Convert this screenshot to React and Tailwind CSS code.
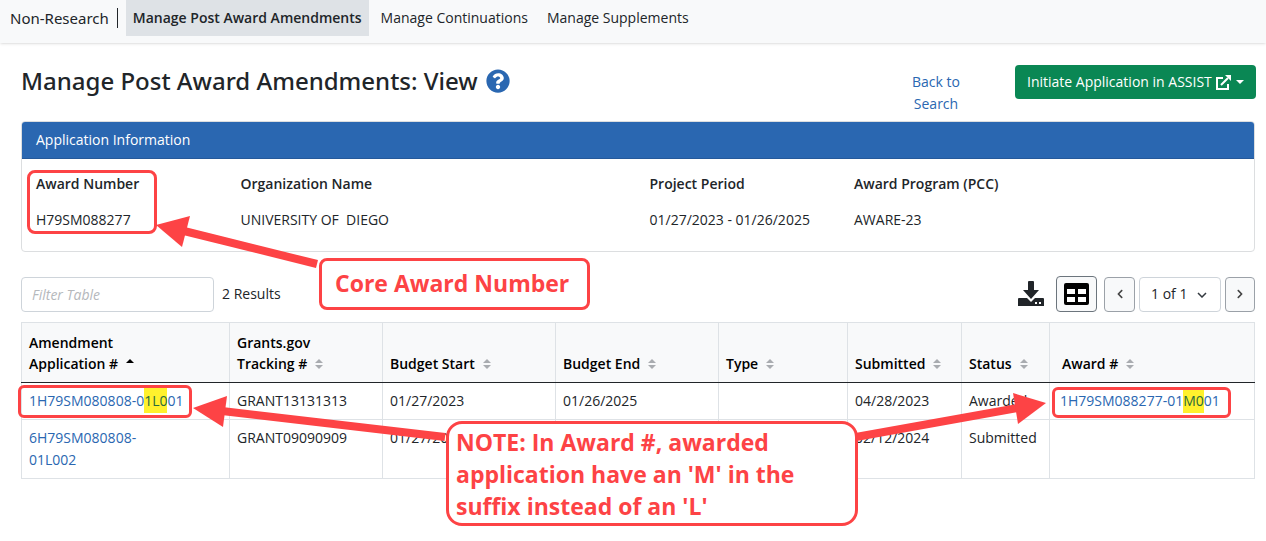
import React, { useState } from 'react';
import { FaQuestionCircle, FaChevronLeft, FaChevronRight } from 'react-icons/fa';

const tabs = ['Manage Post Award Amendments', 'Manage Continuations', 'Manage Supplements'];

const info = [
    { label: 'Award Number', value: 'H79SM088277', width: 'w-1/6' },
    { label: 'Organization Name', value: 'UNIVERSITY OF  DIEGO', width: 'w-1/3' },
    { label: 'Project Period', value: '01/27/2023 - 01/26/2025', width: 'w-1/6' },
    { label: 'Award Program (PCC)', value: 'AWARE-23', width: 'w-1/3' },
];

const columns = [
    { label: 'Amendment Application #', width: 'w-[208px]', sorted: true },
    { label: 'Grants.gov Tracking #', width: 'w-[153px]' },
    { label: 'Budget Start', width: 'w-[173px]' },
    { label: 'Budget End', width: 'w-[163px]' },
    { label: 'Type', width: 'w-[129px]' },
    { label: 'Submitted', width: 'w-[114px]' },
    { label: 'Status', width: 'w-[88px]' },
    { label: 'Award #', width: 'w-auto' },
];

const rows = [
    {
        application: ['1H79SM080808-0', '1L0', '01'],
        tracking: 'GRANT13131313',
        start: '01/27/2023',
        end: '01/26/2025',
        type: '',
        submitted: '04/28/2023',
        status: 'Awarded',
        award: ['1H79SM088277-01', 'M0', '01'],
    },
    {
        application: ['6H79SM080808- 01L002'],
        tracking: 'GRANT09090909',
        start: '01/27/2023',
        end: '',
        type: '',
        submitted: '02/12/2024',
        status: 'Submitted',
    },
];

const SortIcon = ({ sorted }) => (
    <svg viewBox="0 0 8 12" className="inline-block w-2 h-3 ml-2 align-[-1px]" aria-hidden="true">
        {sorted ? (
            <path d="M0 5 4 1l4 4z" fill="#000" />
        ) : (
            <path d="M0 5 4 1l4 4zM0 7h8l-4 4z" fill="#a9acb0" />
        )}
    </svg>
);

const ExternalIcon = () => (
    <svg viewBox="0 0 15 15" className="w-[15px] h-[15px] ml-1" aria-hidden="true">
        <path d="M7 3H1v11h11V9M5 10l7-7" fill="none" stroke="currentColor" strokeWidth="2" />
        <path d="M9 0h6v6z" fill="currentColor" />
    </svg>
);

const DownloadIcon = () => (
    <svg viewBox="0 0 26 26" className="w-[26px] h-[26px]" aria-hidden="true">
        <path
            d="M11 0h4q1 0 1 1v8h5l-8 9-8-9h5V1q0-1 1-1zM1 17h8l4 4 4-4h8q1 0 1 1v7H0v-7q0-1 1-1z"
            fill="#212529"
        />
        <path d="M17 21h2v2h-2zM21 21h2v2h-2z" fill="#fff" />
    </svg>
);

const GridIcon = () => (
    <svg viewBox="0 0 25 22" className="w-[25px] h-[22px]" aria-hidden="true">
        <rect width="25" height="22" rx="2" fill="#000" />
        <path d="M3 6h8v5H3zM14 6h8v5h-8zM3 14h8v5H3zM14 14h8v5h-8z" fill="#fff" />
    </svg>
);

const Link = ({ parts }) => {
    const [before, marked, after] = parts;
    return (
        <a href="#" className="text-[#2a67b1]">
            {before}
            {marked && <mark className="bg-[#fff12d] text-[#2a6a3c] py-[3px]">{marked}</mark>}
            {after}
        </a>
    );
};

// Callout arrows, each drawn in its own box above the page
const Arrow = ({ className, viewBox, head, shaft }) => (
    <svg viewBox={viewBox} className={`absolute pointer-events-none ${className}`} aria-hidden="true">
        <path d={shaft} stroke="#fd4345" strokeWidth="8" />
        <path d={head} fill="#fd4345" />
    </svg>
);

const App = () => {
    const [filter, setFilter] = useState('');

    return (
        <div className="relative min-h-screen overflow-hidden bg-white text-[#212529] text-[14px] leading-[22px] font-['Open_Sans','Noto_Sans',sans-serif]">
            {/* Top navigation */}
            <nav className="flex items-start h-[43px] bg-[#f8f9fa] shadow-sm">
                <span className="mt-2 pl-[10px] pr-2 text-[15px] border-r border-[#212529] leading-5 font-['Noto_Sans',sans-serif]">Non-Research</span>
                <div className="flex ml-2">
                    {tabs.map((tab, i) => (
                        <a
                            key={tab}
                            href="#"
                            className={i === 0 ? 'h-9 px-[7px] py-[7px] mr-1 font-semibold bg-[#dee2e6]' : 'h-9 px-2 py-[7px] mr-[3px]'}
                        >
                            {tab}
                        </a>
                    ))}
                </div>
            </nav>

            <main className="pl-[21px] pr-[11px]">
                {/* Title */}
                <header className="flex items-start pt-[22px] h-[78px] -mr-px">
                    <h1 className="flex items-center gap-2 text-[24px] leading-8 font-medium font-['Noto_Sans',sans-serif]">
                        Manage Post Award Amendments: View
                        <FaQuestionCircle className="w-6 h-6 text-[#2a67b1]" />
                    </h1>
                    <a href="#" className="w-16 mt-[6px] ml-auto mr-[47px] text-center text-[#2a67b1]">Back to Search</a>
                    <button className="flex items-center w-[241px] h-[34px] px-3 rounded bg-[#0a8754] text-white whitespace-nowrap">
                        Initiate Application in ASSIST
                        <ExternalIcon />
                        <svg viewBox="0 0 8 4" className="w-2 h-1 ml-auto" aria-hidden="true">
                            <path d="M0 0h8L4 4z" fill="currentColor" />
                        </svg>
                    </button>
                </header>

                {/* Application information */}
                <section className="h-[131px] border border-[#dcdee0] rounded overflow-hidden">
                    <h2 className="px-[14px] py-[7px] bg-[#2a67b1] border-b border-[#25599a] text-white">Application Information</h2>
                    <dl className="flex ml-[14px] -mr-[9px] pt-[14px]">
                        {info.map((item) => (
                            <div key={item.label} className={item.width}>
                                <dt className="font-semibold">{item.label}</dt>
                                <dd className="mt-[14px] whitespace-pre">{item.value}</dd>
                            </div>
                        ))}
                    </dl>
                </section>

                {/* Table toolbar */}
                <div className="flex items-center h-[36px] mt-6">
                    <input
                        type="text"
                        aria-label="Filter Table"
                        placeholder="Filter Table"
                        value={filter}
                        onChange={(e) => setFilter(e.target.value)}
                        className="w-[193px] h-[35px] px-[10px] border border-[#ced4da] rounded placeholder:italic placeholder:text-[#b5b8bc]"
                    />
                    <span className="ml-2">2 Results</span>
                    <button aria-label="Download" className="ml-auto mr-3">
                        <DownloadIcon />
                    </button>
                    <button aria-label="Table view" className="flex items-center justify-center w-[41px] h-9 mr-[7px] border border-[#6c757d] rounded bg-[#f8f9fa]">
                        <GridIcon />
                    </button>
                    <button aria-label="Previous page" className="flex items-center justify-center w-[31px] h-[35px] mr-1 border border-[#9ba1a8] rounded bg-[#f8f9fa]">
                        <FaChevronLeft className="w-2 h-[10px] text-[#444]" />
                    </button>
                    <div className="relative">
                        <select aria-label="Page" className="w-[82px] h-[35px] pl-[11px] border border-[#ced4da] rounded bg-white appearance-none">
                            <option>1 of 1</option>
                        </select>
                        <svg viewBox="0 0 10 6" className="absolute right-[14px] top-[15px] w-[10px] h-[6px] pointer-events-none" aria-hidden="true">
                            <path d="M1 1l4 4 4-4" fill="none" stroke="#343a40" strokeWidth="1.5" />
                        </svg>
                    </div>
                    <button aria-label="Next page" className="flex items-center justify-center w-[30px] h-[35px] ml-1 border border-[#9ba1a8] rounded bg-[#f8f9fa]">
                        <FaChevronRight className="w-2 h-[10px] text-[#444]" />
                    </button>
                </div>

                {/* Amendments */}
                <table className="w-full mt-[10px] table-fixed border-collapse">
                    <thead className="bg-[#f8f9fa] text-black">
                        <tr className="h-[60px]">
                            {columns.map((col, i) => (
                                <th
                                    key={col.label}
                                    className={`${col.width} ${i === 7 ? 'pl-3' : 'pl-[7px]'} pb-2 text-left align-bottom leading-[21px] border border-[#dee2e6] border-b-[#212529]`}
                                >
                                    <button className={`text-left font-semibold ${i < 2 ? 'w-[115px]' : ''}`}>
                                        {col.label}
                                        <SortIcon sorted={col.sorted} />
                                    </button>
                                </th>
                            ))}
                        </tr>
                    </thead>
                    <tbody>
                        {rows.map((row) => (
                            <tr key={row.tracking} className="align-top [&>td]:border [&>td]:border-[#dee2e6] [&>td]:px-[7px] [&>td]:py-[7px]">
                                <td>
                                    <div className={row.award ? '' : 'w-[120px]'}>
                                        <Link parts={row.application} />
                                    </div>
                                </td>
                                <td>{row.tracking}</td>
                                <td>{row.start}</td>
                                <td>{row.end}</td>
                                <td>{row.type}</td>
                                <td>{row.submitted}</td>
                                <td>{row.status}</td>
                                <td>
                                    <div className="pl-[3px]">{row.award && <Link parts={row.award} />}</div>
                                </td>
                            </tr>
                        ))}
                    </tbody>
                </table>
            </main>

            {/* Callouts */}
            <div className="absolute left-[27px] top-[170px] w-[130px] h-[64px] border-3 border-[#fd4345] rounded-lg pointer-events-none" />
            <div className="absolute left-[18px] top-[385px] w-[174px] h-[33px] border-3 border-[#fd4345] rounded-md pointer-events-none" />
            <div className="absolute left-[1052px] top-[387px] w-[179px] h-[31px] border-3 border-[#fd4345] rounded-md pointer-events-none" />
            <Arrow
                className="left-[156px] top-[210px] w-[164px] h-[60px]"
                viewBox="156 210 164 60"
                shaft="M184 231 317 264"
                head="M156 225 190 216 182 247z"
            />
            <Arrow
                className="left-[192px] top-[394px] w-[258px] h-[50px]"
                viewBox="192 394 258 50"
                shaft="M222 411 445 437"
                head="M193 408 227 396 223 427z"
            />
            <Arrow
                className="left-[854px] top-[390px] w-[194px] h-[54px]"
                viewBox="854 390 194 54"
                shaft="M856 437 1018 408"
                head="M1046 403 1013 393 1018 424z"
            />
            <div className="absolute left-[319px] top-[258px] w-[271px] h-[52px] pl-[13px] pt-[6px] bg-white border-3 border-[#fd4345] rounded-lg text-[#fd4345] text-[23px] leading-8 font-bold">
                Core Award Number
            </div>
            <div className="absolute left-[446px] top-[421px] w-[412px] h-[105px] pl-[7px] pt-[2px] bg-white border-3 border-[#fd4345] rounded-2xl text-[#fd4345] text-[23px] leading-8 font-bold">
                NOTE: In Award #, awarded<br />
                application have an 'M' in the<br />
                suffix instead of an 'L'
            </div>
        </div>
    );
};

export default App;
